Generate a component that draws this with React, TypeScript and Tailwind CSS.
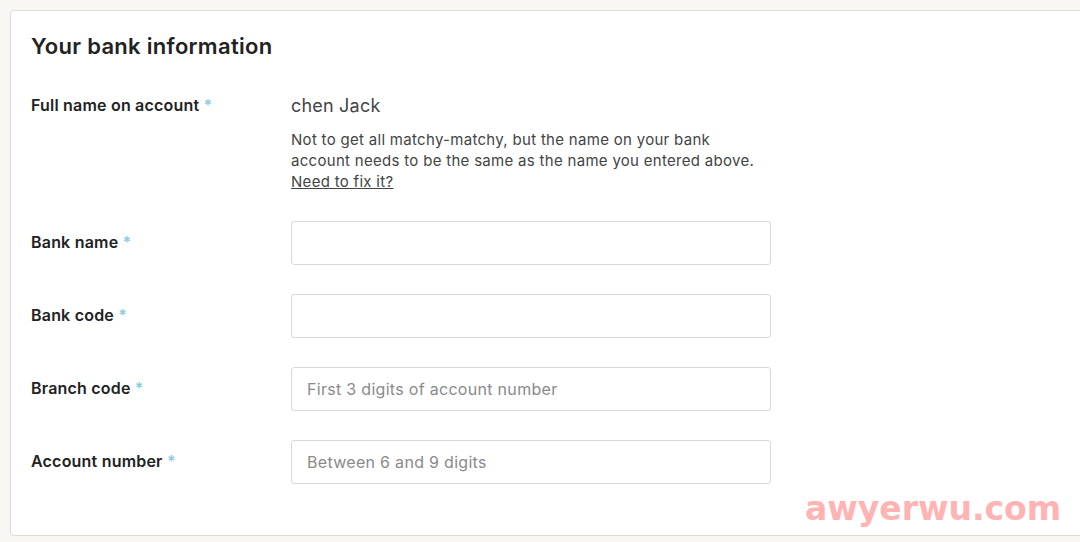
import React from 'react';

const fields = [
  { label: 'Bank name', placeholder: '' },
  { label: 'Bank code', placeholder: '' },
  { label: 'Branch code', placeholder: 'First 3 digits of account number' },
  { label: 'Account number', placeholder: 'Between 6 and 9 digits' },
];

function Label({ text }: { text: string }) {
  return (
    <div className="w-[260px] shrink-0 text-[16px] font-semibold tracking-[0.2px] text-[#222222]">
      {text} <span className="text-[#8fcbe0]">*</span>
    </div>
  );
}

export default function App() {
  return (
    <div
      className="relative h-[542px] w-[1080px] overflow-hidden bg-[#f8f7f3] pl-[10px] pt-[10px]"
      style={{ fontFamily: 'Inter, "Liberation Sans", sans-serif' }}
    >
      <div className="h-[526px] w-[1090px] rounded-[4px] border border-[#dedbd3] bg-white px-[20px] pt-[21px]">
        <h1 className="text-[22px] font-semibold leading-[28px] tracking-[0.3px] text-[#222222]">Your bank information</h1>

        <div className="mt-[35px] flex items-start">
          <div className="-mt-[2px]">
            <Label text="Full name on account" />
          </div>
          <div className="pt-[1px]">
            <div className="text-[18px] leading-[20px] tracking-[0.2px] text-[#444444]">chen Jack</div>
            <p className="mt-[13px] w-[470px] text-[15px] leading-[21px] tracking-[0.3px] text-[#444444]">
              Not to get all matchy-matchy, but the name on your bank account needs to be the same as the name you
              entered above.
              <br />
              <a href="#" className="underline">Need to fix it?</a>
            </p>
          </div>
        </div>

        <div className="mt-[29px] flex flex-col gap-[29px]">
          {fields.map((f) => (
            <div key={f.label} className="flex items-center">
              <div className="-mt-[2px]">
                <Label text={f.label} />
              </div>
              <input
                type="text"
                placeholder={f.placeholder}
                className="h-[44px] w-[480px] rounded-[3px] border border-[#d9d9d9] px-[15px] text-[16px] tracking-[0.3px] text-[#222] placeholder:text-[#8a8a8a] outline-none"
              />
            </div>
          ))}
        </div>
      </div>

      <div
        className="absolute left-[805px] top-[489px] text-[33px] font-bold leading-[40px] text-[#ffb3b3]"
        style={{ fontFamily: '"DejaVu Sans", sans-serif' }}
      >
        awyerwu.com
      </div>
    </div>
  );
}
